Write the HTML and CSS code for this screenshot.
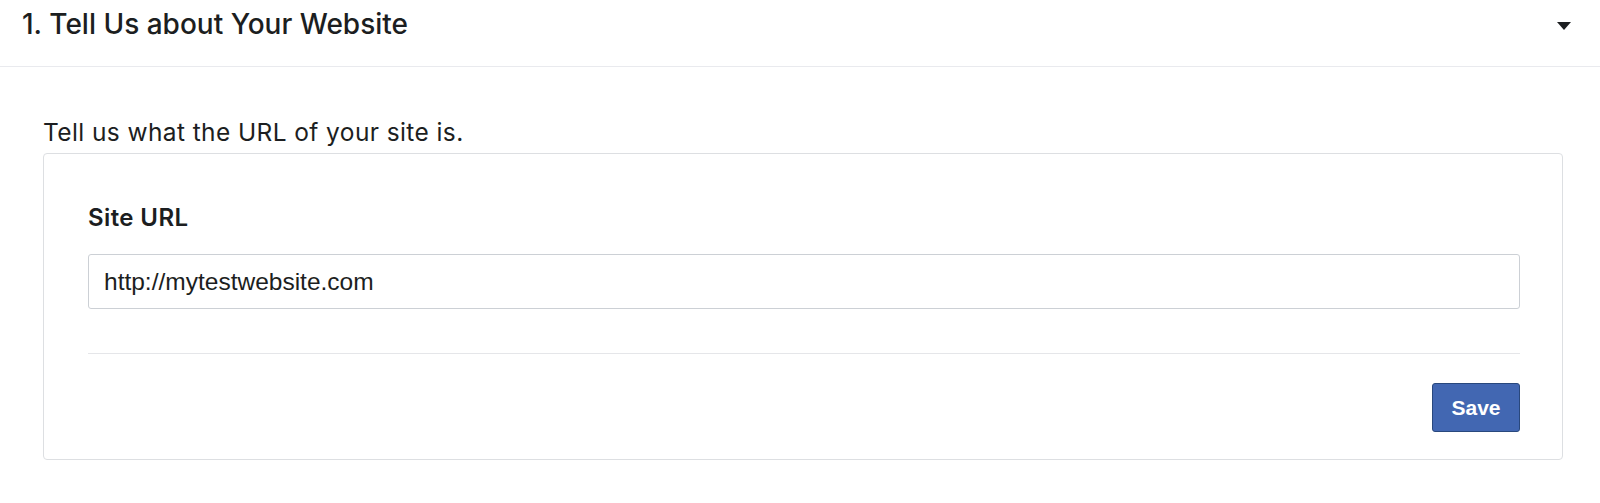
FILE: index.html
```html
<!DOCTYPE html>
<html lang="en">
<head>
<meta charset="utf-8">
<title>Tell Us about Your Website</title>
<link rel="stylesheet" href="styles.css">
</head>
<body>
<div class="section">
  <div class="section-header">
    <h2 class="section-title">1. Tell Us about Your Website</h2>
    <svg class="caret" width="14" height="8" viewBox="0 0 14 8"><path d="M0 0 H14 L7 8 Z" fill="#1c1e21"/></svg>
  </div>
  <div class="section-body">
    <p class="intro">Tell us what the URL of your site is.</p>
    <div class="card">
      <label class="field-label" for="site-url">Site URL</label>
      <input class="field-input" id="site-url" type="text" value="http://mytestwebsite.com">
      <div class="divider"></div>
      <div class="actions">
        <button class="btn-primary" type="button">Save</button>
      </div>
    </div>
  </div>
</div>
</body>
</html>
```

FILE: styles.css
```css
* { box-sizing: border-box; }
html, body { margin: 0; padding: 0; background: #fff; }
body { font-family: Inter, "Noto Sans", sans-serif; color: #1c1e21; }

.section-header {
  height: 67px;
  border-bottom: 1px solid #e9eaee;
  display: flex;
  align-items: center;
  justify-content: space-between;
  padding: 0 29px 18px 22px;
}
.section-title {
  margin: 0;
  font-size: 28px;
  font-weight: 500;
  line-height: 34px;
  color: #1c1e21;
}
.caret { display: block; margin-top: 3px; }

.section-body {
  padding: 51px 37px 0 43px;
}
.intro {
  margin: 0 0 7px;
  font-size: 24.5px;
  line-height: 28px;
  letter-spacing: 0.4px;
  color: #1c1e21;
}
.card {
  border: 1px solid #dddfe2;
  border-radius: 4px;
  padding: 50px 42px 27px 44px;
  display: flex;
  flex-direction: column;
}
.field-label {
  font-size: 24px;
  font-weight: 600;
  line-height: 28px;
  letter-spacing: 0.4px;
  color: #1c1e21;
  margin-bottom: 22px;
}
.field-input {
  height: 55px;
  border: 1px solid #ccd0d5;
  border-radius: 3px;
  padding: 0 15px;
  font-family: "Liberation Sans", Arial, sans-serif;
  font-size: 24.5px;
  color: #1c1e21;
  outline: none;
}
.divider {
  height: 1px;
  background: #e5e6e9;
  margin: 44px 0 29px;
}
.actions { display: flex; justify-content: flex-end; }
.btn-primary {
  width: 88px;
  height: 49px;
  background: #4267b2;
  border: 1px solid #29487d;
  border-radius: 3px;
  color: #fff;
  font-family: "Liberation Sans", Arial, sans-serif;
  font-weight: bold;
  font-size: 21px;
  padding: 0;
}
```
